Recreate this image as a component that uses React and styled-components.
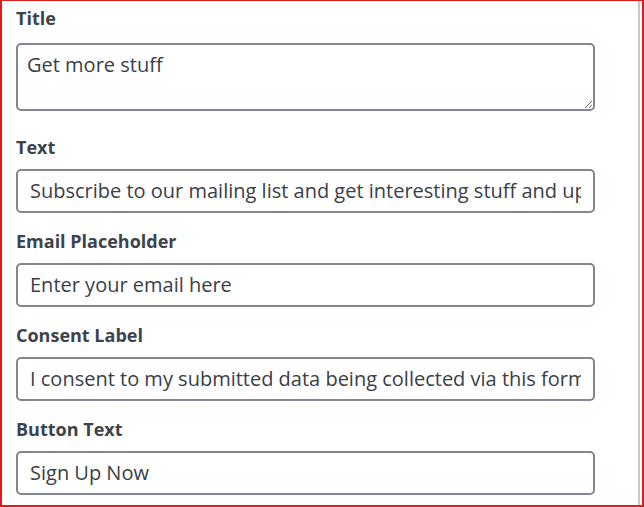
import React from 'react'
import styled, {createGlobalStyle} from 'styled-components'

const GlobalStyle = createGlobalStyle`
  html, body {
    margin: 0;
    padding: 0;
    background: #ffffff;
  }
  * { box-sizing: border-box; }
`

const Frame = styled.div`
  width: 644px;
  height: 507px;
  display: flex;
  border-top: 1px solid #e01b1b;
  border-left: 2px solid #e01b1b;
  border-bottom: 2px solid #e01b1b;
  border-right: 2px solid #e01b1b;
  overflow: hidden;
  background: #fff;
  font-family: "Open Sans", "Noto Sans", sans-serif;
  color: #32373c;
`

const Panel = styled.div`
  flex: 1;
  padding: 5px 0 0 14px;
  overflow: hidden;
`

const ScrollEdge = styled.div`
  width: 4px;
  border-left: 2px solid #c9c9c9;
`

const Field = styled.div`
  width: 579px;
  margin-bottom: ${p => p.$gap}px;
`

const Label = styled.label`
  display: block;
  font-size: 18px;
  font-weight: 700;
  line-height: 24px;
  color: #3c434a;
  margin-bottom: ${p => p.$space}px;
`

const TextBox = styled.input`
  display: block;
  width: 100%;
  height: 44px;
  padding: 0 12px;
  border: 2px solid #80878e;
  border-radius: 5px;
  font-family: inherit;
  font-size: 20px;
  color: #3a4047;
  background: #fff;
  outline: none;
`

const TextArea = styled.textarea`
  display: block;
  width: 100%;
  height: 68px;
  padding: 6px 9px;
  border: 2px solid #80878e;
  border-radius: 5px;
  font-family: inherit;
  font-size: 20px;
  line-height: 28px;
  color: #3a4047;
  background: #fff;
  resize: vertical;
  outline: none;
`

const fields = [
  {label: 'Text', value: 'Subscribe to our mailing list and get interesting stuff and updates to your email inbox.'},
  {label: 'Email Placeholder', value: 'Enter your email here'},
  {label: 'Consent Label', value: 'I consent to my submitted data being collected via this form'},
  {label: 'Button Text', value: 'Sign Up Now'},
]

export default function App() {
  return (
    <>
      <GlobalStyle />
      <Frame>
        <Panel>
          <Field $gap={24}>
            <Label $space={13}>Title</Label>
            <TextArea defaultValue="Get more stuff" />
          </Field>
          {fields.map(f => (
            <Field key={f.label} $gap={16.5}>
              <Label $space={9.5}>{f.label}</Label>
              <TextBox defaultValue={f.value} />
            </Field>
          ))}
        </Panel>
        <ScrollEdge />
      </Frame>
    </>
  )
}
